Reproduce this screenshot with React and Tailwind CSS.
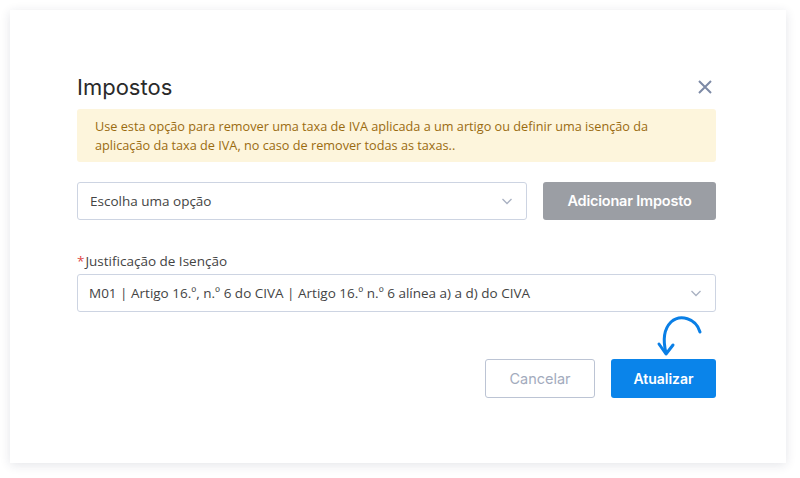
import React from "react";

function Chevron() {
    return (
        <svg width="14" height="14" viewBox="0 0 14 14" fill="none" stroke="#a9b1c2" strokeWidth="1.3">
            <path d="M2.5 5 L7 9.5 L11.5 5" />
        </svg>
    );
}

function App() {
    return (
        <div className="w-[800px] h-[478px] bg-white pt-[10px] pl-[10px]" style={{ fontFamily: "'Open Sans', 'Liberation Sans', sans-serif" }}>
            {/* Modal card */}
            <div className="relative w-[776px] h-[453px] bg-white shadow-[0_2px_10px_rgba(30,40,70,0.12)] pl-[67px] pr-[70px] pt-[61px]">
                {/* Header */}
                <div className="flex items-center justify-between h-[32px]">
                    <h1 className="text-[22px] text-[#2a2a2a]" style={{ fontFamily: "Inter, 'Open Sans', sans-serif" }}>
                        Impostos
                    </h1>
                    <svg width="18" height="18" viewBox="0 0 18 18" stroke="#7d8aa6" strokeWidth="2" className="mr-[2px]">
                        <path d="M3 3 L15 15 M15 3 L3 15" />
                    </svg>
                </div>

                {/* Notice */}
                <div className="mt-[6px] bg-[#fdf5dc] rounded-[3px] px-[18px] pt-[8px] pb-[7px] text-[12.7px] leading-[19px] text-[#9a6b10]">
                    Use esta opção para remover uma taxa de IVA aplicada a um artigo ou definir uma isenção da
                    <br />
                    aplicação da taxa de IVA, no caso de remover todas as taxas..
                </div>

                {/* Tax select row */}
                <div className="mt-[20px] flex gap-[16px]">
                    <div className="flex-1 h-[38px] border border-[#cdd4e2] rounded-[3px] flex items-center justify-between pl-[12px] pr-[12px] text-[13.5px] text-[#444]">
                        <span>Escolha uma opção</span>
                        <Chevron />
                    </div>
                    <button className="w-[173px] h-[38px] bg-[#9b9ea4] rounded-[3px] text-white text-[14.5px] font-semibold tracking-[-0.2px]" style={{ fontFamily: "Inter, sans-serif" }}>
                        Adicionar Imposto
                    </button>
                </div>

                {/* Exemption */}
                <div className="mt-[32px] text-[13.5px] text-[#444] leading-[18px]">
                    <span className="text-[#e04848] mr-[1px]">*</span>Justificação de Isenção
                </div>
                <div className="mt-[4px] h-[38px] border border-[#cdd4e2] rounded-[3px] flex items-center justify-between pl-[11px] pr-[12px] text-[13.5px] text-[#444]">
                    <span>M01 | Artigo 16.º, n.º 6 do CIVA | Artigo 16.º n.º 6 alínea a) a d) do CIVA</span>
                    <Chevron />
                </div>

                {/* Actions */}
                <div className="mt-[47px] flex justify-end gap-[16px]" style={{ fontFamily: "Inter, sans-serif" }}>
                    <button className="w-[110px] h-[39px] border-[1.5px] border-[#bcc4d4] rounded-[3px] text-[#a3abbd] text-[14.5px]">
                        Cancelar
                    </button>
                    <button className="w-[105px] h-[39px] bg-[#0a84ea] rounded-[3px] text-white text-[14px] font-semibold">
                        Atualizar
                    </button>
                </div>

                {/* Curved arrow hint */}
                <svg className="absolute left-[635px] top-[295px]" width="60" height="55" viewBox="645 305 60 55" fill="none" stroke="#0a7fe6" strokeWidth="3" strokeLinecap="round" strokeLinejoin="round">
                    <path d="M700 332 C 696 318, 680 314, 671 322 C 664 329, 663 341, 666 353" />
                    <path d="M659 344 L666 354 L673 345" />
                </svg>
            </div>
        </div>
    );
}

export default App;
